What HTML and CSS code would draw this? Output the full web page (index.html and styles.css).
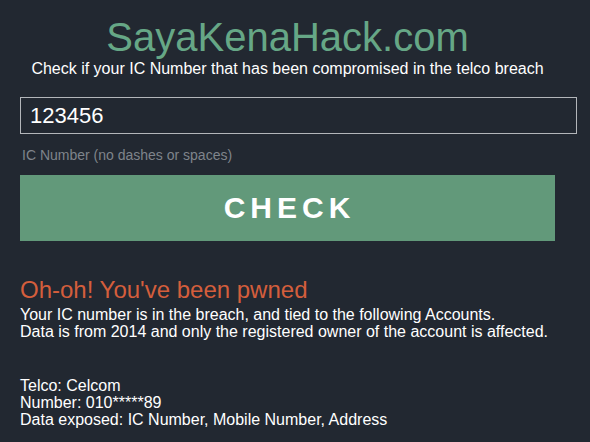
FILE: index.html
```html
<!DOCTYPE html>
<html lang="en">
<head>
    <meta charset="UTF-8">
    <meta name="viewport" content="width=device-width, initial-scale=1.0">
    <title>SayaKenaHack.com</title>
    <link rel="stylesheet" href="styles.css">
</head>
<body>
    <div class="container">
        <h1 class="title">SayaKenaHack.com</h1>
        <p class="subtitle">Check if your IC Number that has been compromised in the telco breach</p>

        <form id="form" class="check-form">
            <input type="text" id="icInput" class="ic-input" value="123456">
            <small class="hint">IC Number (no dashes or spaces)</small>
            <button type="button" class="check-button">CHECK</button>
        </form>

        <div id="resultado" class="result">
            <h2 class="result-title">Oh-oh! You've been pwned</h2>
            <p class="result-text">Your IC number is in the breach, and tied to the following Accounts.<br>
            Data is from 2014 and only the registered owner of the account is affected.</p>

            <p class="account">Telco: Celcom<br>
            Number: 010*****89<br>
            Data exposed: IC Number, Mobile Number, Address</p>
        </div>
    </div>
</body>
</html>
```

FILE: styles.css
```css
body {
    font-family: "Liberation Sans", Arial, sans-serif;
    background-color: #222831;
    color: #ffffff;
    margin: 0;
    padding: 15px 20px 0 20px;
}
.container {
    width: 535px;
}
.title {
    font-size: 40px;
    font-weight: normal;
    text-align: center;
    color: #66a786;
    margin: 0;
}
.subtitle {
    font-size: 16px;
    text-align: center;
    margin: 0 0 19px 0;
}
.check-form {
    display: flex;
    flex-direction: column;
    margin: 0;
}
.ic-input {
    box-sizing: border-box;
    width: 557px;
    height: 37px;
    padding: 0 10px 0 9px;
    font-family: "Liberation Sans", Arial, sans-serif;
    font-size: 22px;
    color: #ffffff;
    background-color: #222831;
    border: 1px solid #b3b6ba;
    border-radius: 0;
    outline: none;
}
.hint {
    font-size: 14px;
    color: #7f848b;
    margin: 13px 0 12px 2px;
}
.check-button {
    width: 100%;
    height: 66px;
    padding: 0;
    font-family: "Liberation Sans", Arial, sans-serif;
    font-size: 30px;
    font-weight: bold;
    letter-spacing: 5px;
    text-indent: 4px;
    color: #ffffff;
    background-color: #62997a;
    border: none;
    border-radius: 0;
    cursor: pointer;
}
.result {
    margin-top: 35px;
}
.result-title {
    font-size: 24px;
    font-weight: normal;
    color: #d45e3c;
    margin: 0 0 2px 0;
}
.result-text, .account {
    font-size: 16px;
    line-height: 17px;
    margin: 0;
}
.account {
    margin-top: 37px;
}
```
